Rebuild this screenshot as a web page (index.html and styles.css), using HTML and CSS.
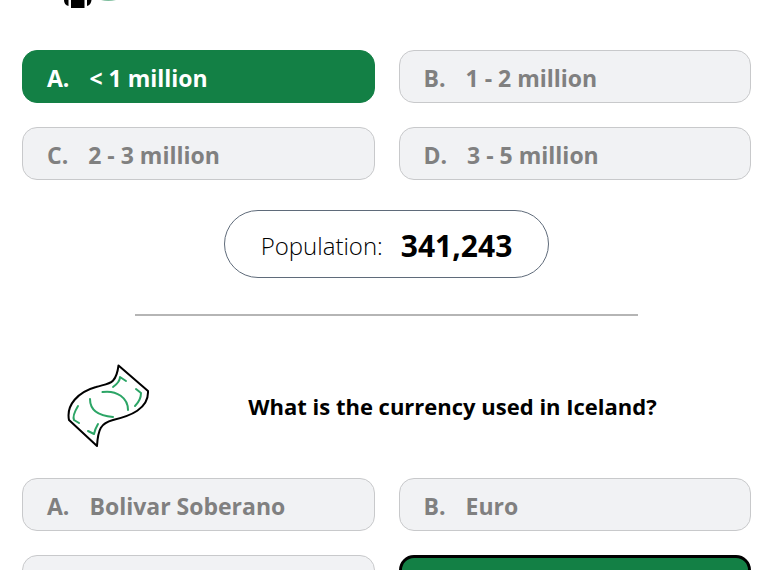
FILE: index.html
```html
<!DOCTYPE html>
<html lang="en">
<head>
    <meta charset="UTF-8">
    <meta name="viewport" content="width=device-width, initial-scale=1.0">
    <title>Country Quiz</title>
    <link rel="stylesheet" href="styles.css">
</head>
<body>
    <main class="quiz">
        <section class="question-block">
            <div class="people-row">
                <svg class="people-icon" viewBox="0 0 56 8" aria-hidden="true">
                    <path d="M0 0H4.500V6Q0 5 0 0Z"/>
                    <path d="M7 0H20.500V8H7Z"/>
                    <path d="M23 0H27.500Q27 5 23 6Z"/>
                    <path class="accent" d="M37 0H52Q44 2 37 0Z"/>
                </svg>
            </div>
            <div class="answers">
                <button type="button" class="answer correct"><span>A.</span><span>&lt; 1 million</span></button>
                <button type="button" class="answer"><span>B.</span><span>1 - 2 million</span></button>
                <button type="button" class="answer"><span>C.</span><span>2 - 3 million</span></button>
                <button type="button" class="answer"><span>D.</span><span>3 - 5 million</span></button>
            </div>
            <div class="result">
                <span>Population:</span>
                <strong>341,243</strong>
            </div>
        </section>

        <hr class="divider">

        <section class="question-block">
            <div class="question">
                <svg class="money-icon" viewBox="0 0 84 84" aria-hidden="true">
                    <path class="note" d="M52.500 1.500C50 21 43 19 30 23C12 28 0 41 3 56L31 82C32 65 35 59 47 56C64 52 83 45 82 27Z"/>
                    <path class="mark" d="M36.500 28C51 26 62 34 62 46M24 35C24 47 34 52 47 53M47 23Q54 18 54 13L60 17M70 25L75 29Q75 36 69 42M12 42Q6 52 8 56L13 59M22 67L28 70Q29 65 32 60"/>
                </svg>
                <h2>What is the currency used in Iceland?</h2>
            </div>
            <div class="answers">
                <button type="button" class="answer"><span>A.</span><span>Bolivar Soberano</span></button>
                <button type="button" class="answer"><span>B.</span><span>Euro</span></button>
                <button type="button" class="answer" aria-label="Answer C"></button>
                <button type="button" class="answer correct selected" aria-label="Answer D"></button>
            </div>
        </section>
    </main>
</body>
</html>
```
FILE: styles.css
```css
* {
    margin: 0;
    padding: 0;
    box-sizing: border-box;
}

body {
    height: 100vh;
    overflow: hidden;
    background: #fff;
    color: #000;
    font-family: "Open Sans", "Noto Sans", sans-serif;
}

.quiz {
    padding: 0 28px 0 22px;
}

.question-block {
    display: flex;
    flex-direction: column;
}

.people-row {
    height: 50px;
    padding-left: 42px;
}

.people-icon {
    display: block;
    width: 56px;
    height: 8px;
}

.people-icon .accent {
    fill: #7dbd9d;
}

/* answers */
.answers {
    display: grid;
    grid-template-columns: 1fr 1fr;
    gap: 24px;
}

.answer {
    display: flex;
    align-items: center;
    gap: 20px;
    height: 53px;
    padding: 2px 24px 0;
    border: 1px solid #c8c9cb;
    border-radius: 15px;
    background: #f1f2f4;
    color: #808080;
    font-family: inherit;
    font-size: 23px;
    font-weight: 700;
    line-height: 30px;
    text-align: left;
    cursor: pointer;
}

.answer.correct {
    border-color: #138045;
    background: #138045;
    color: #fff;
}

.answer.selected {
    border: 3px solid #000;
}

.result {
    display: flex;
    align-items: center;
    align-self: center;
    gap: 18px;
    height: 68px;
    margin-top: 30px;
    padding: 2px 36px 0;
    border: 1px solid #5f6b7a;
    border-radius: 34px;
    font-size: 24px;
    font-weight: 300;
}

.result strong {
    font-size: 30px;
    font-weight: 700;
}

.divider {
    width: 69%;
    height: 2px;
    margin: 36px auto 0;
    border: none;
    background: #b5b5b5;
}

/* question title */
.question {
    display: flex;
    align-items: center;
    margin: 48px 0 30px;
    padding-left: 44px;
}

.money-icon {
    flex: none;
    width: 84px;
    height: 84px;
    fill: none;
    stroke-width: 2;
    stroke-linecap: round;
    stroke-linejoin: round;
}

.money-icon .note {
    stroke: #000;
}

.money-icon .mark {
    stroke: #2ca566;
}

.question h2 {
    flex: 1;
    padding-left: 4px;
    font-size: 22px;
    font-weight: 700;
    line-height: 30px;
    text-align: center;
}
```
